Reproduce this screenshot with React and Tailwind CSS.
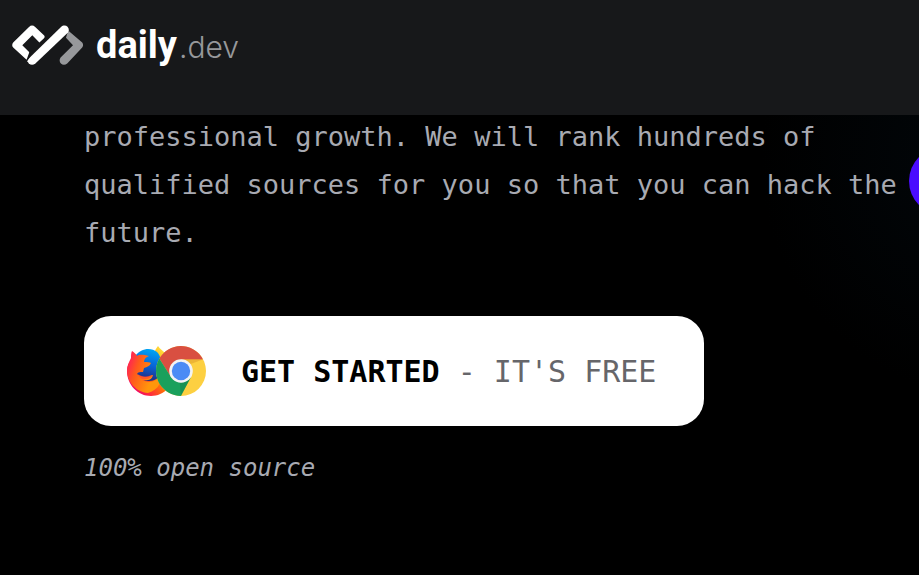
function DailyMark() {
  return (
    <svg viewBox="0 0 72 40" className="h-10 w-18 shrink-0" aria-hidden="true">
      <path d="M56.7 6 70.2 17.6Q72 20 70.2 22.6L55.2 38.4C50.8 42 45.4 37 48.6 32.6L61 20.3 54 12.8Q54.6 9 56.7 6Z" fill="#97989b" />
      <path d="M17 2Q20 -.8 23.2 2L32.2 10.6Q33.2 12 32 13.2L27.4 17.6 20.3 10.2 10.3 20.3 17.3 27.3 14.6 34.8 1.2 22.6Q-.8 20.2 1.2 17.6Z" fill="#fff" />
      <path d="M49 2C53.4 -1.8 59 3 56 7.6L23.4 38.4Q20 41.2 16.8 38.4L15.4 36.2Q15.6 34.8 17.8 32.4Z" fill="#fff" />
      <path d="M17.6 27.4Q19.4 29.8 17.2 32.4L15 35" fill="none" stroke="#17181a" strokeWidth=".7" />
    </svg>
  );
}

function FirefoxIcon() {
  return (
    <svg viewBox="0 0 50 52" className="h-[52px] w-[50px] shrink-0" aria-hidden="true">
      <defs>
        <linearGradient id="fire" x1="0.9" y1="0.1" x2="0.1" y2="0.8">
          <stop offset="0" stopColor="#fff44f" />
          <stop offset="0.3" stopColor="#ffb41a" />
          <stop offset="0.6" stopColor="#ff6b0a" />
          <stop offset="0.85" stopColor="#ff2640" />
          <stop offset="1" stopColor="#ef0a66" />
        </linearGradient>
        <linearGradient id="globe" x1="0.6" y1="0" x2="0.4" y2="1">
          <stop offset="0" stopColor="#00a6f4" />
          <stop offset="0.5" stopColor="#0864d8" />
          <stop offset="1" stopColor="#232779" />
        </linearGradient>
        <linearGradient id="fur" x1="0" y1="0.4" x2="0.7" y2="0.7">
          <stop offset="0" stopColor="#ff2850" />
          <stop offset="0.35" stopColor="#ff5a1c" />
          <stop offset="1" stopColor="#ff960b" />
        </linearGradient>
      </defs>
      <path d="M32 1c2 3 4 4 7 7 6 5 10 11 10 18 0 14-11 25-24 25S1 40 1 26c0-5 2-9 5-12h22c-1-5 1-9 4-13Z" fill="url(#fire)" />
      <path d="M9 11C15 3 25 2 31 7c3 3 5 9 5 15 0 8-5 14-13 14-9 0-15-7-15-14Z" fill="url(#globe)" />
      <path d="M6 6c2 1 4 3 5 5 3-2 7-1 12 0-3 1-5 3-5 6 3 0 6 0 7 1-1 3-4 4-7 5l-1 4c-3 0-5 0-6 2 2 1 5 3 9 3 3 0 5-2 7-2-1 5-6 6-11 5 4 2 9 3 14 0 3-2 4-5 4-8 3 8-1 18-12 21C10 47 1 37 1 25c0-4 2-8 4-12 0-3 0-5 1-7Z" fill="url(#fur)" />
      <path d="M12 29c5 4 9 2 15 1-2 4-7 5-11 4-2-1-3-3-4-5Z" fill="#ff3d35" opacity=".6" />
    </svg>
  );
}

function ChromeIcon() {
  return (
    <svg viewBox="0 0 50 50" className="-ml-5 size-[50px] shrink-0" aria-hidden="true">
      <circle cx="25" cy="25" r="25" fill="#fdd041" />
      <path d="M3.3 12.6A25 25 0 0 1 46.3 12L46.7 13.4 25 13.4 15 31.2Z" fill="#d94f41" />
      <path d="M3.3 12.6 15 31 25 36.5 35 31 24.8 50A25 25 0 0 1 3.3 12.6Z" fill="#1aa05c" />
      <path d="M25 13.4h21.7l-12 4.5Z" fill="#e3a42d" opacity=".6" />
      <path d="M35 31 25 50l-1.2-13.5Z" fill="#12814a" opacity=".5" />
      <circle cx="25" cy="25" r="11.8" fill="#f3f3f3" />
      <circle cx="25" cy="25" r="9.2" fill="#4b8bf5" />
    </svg>
  );
}

export default function App() {
  return (
    <div className="relative min-h-screen overflow-hidden bg-black bg-[radial-gradient(circle_at_1000px_160px,#02070b,#000_240px)] font-['DejaVu_Sans_Mono',monospace] text-[#a8aab2]">
      <header className="flex h-[115px] items-start bg-[#17181a] px-3 pt-5">
        <a href="#home" aria-label="daily.dev" className="flex h-[50px] items-center gap-3">
          <DailyMark />
          <span className="flex items-baseline gap-0.5 leading-none">
            <span className="font-['Roboto',sans-serif] text-[38px] font-bold text-white">daily</span>
            <span className="font-['Inter',sans-serif] text-[30px] font-light text-[#97989b]">.dev</span>
          </span>
        </a>
      </header>

      <main className="-mt-0.5 flex flex-col items-start pl-21">
        <p className="text-[27px] leading-[48px]">
          professional growth. We will rank hundreds of
          <br />
          qualified sources for you so that you can hack the
          <br />
          future.
        </p>
        <button type="button" className="mt-[59px] flex h-[110px] items-center rounded-[27px] bg-white pr-12 pl-[42px] text-[30px] whitespace-pre">
          <span className="mr-[35px] flex items-center">
            <FirefoxIcon />
            <ChromeIcon />
          </span>
          <span className="font-bold text-black">GET STARTED</span>
          <span className="text-[#66666a]"> - IT'S FREE</span>
        </button>
        <p className="mt-6 text-[24px] leading-9 italic">100% open source</p>
      </main>

      <div className="absolute top-[147px] -right-[58px] size-17 rounded-full bg-[#4a0cff]" />
    </div>
  );
}
